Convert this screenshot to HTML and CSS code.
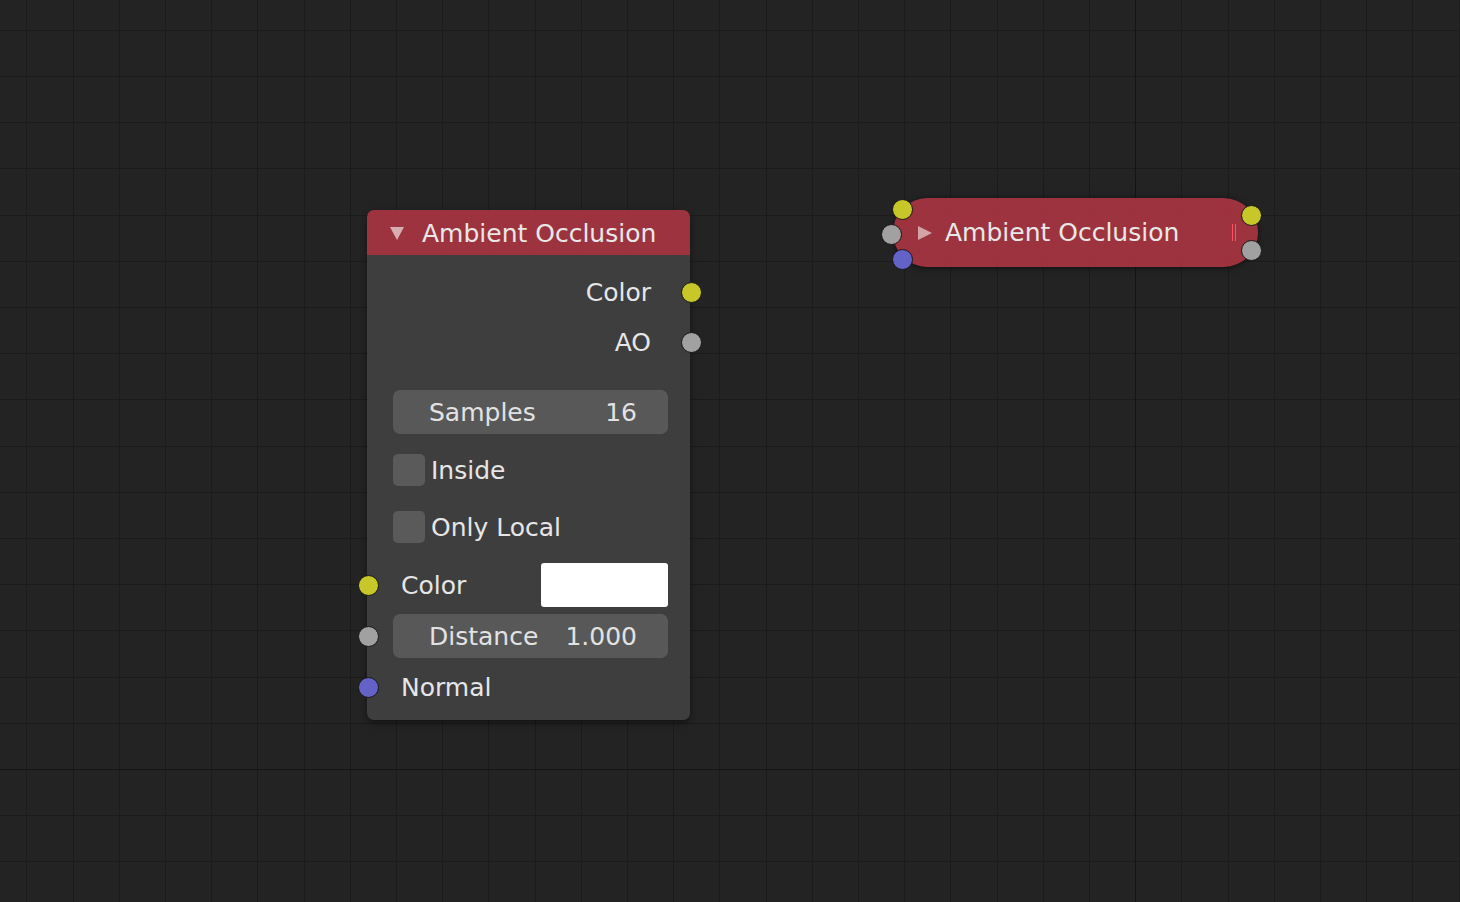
FILE: index.html
```html
<!DOCTYPE html>
<html>
<head>
<meta charset="utf-8">
<link rel="stylesheet" href="styles.css">
</head>
<body>
<div class="canvas">
  <svg class="grid" width="1460" height="902" viewBox="0 0 1460 902">
    <path class="minor" d="M26.5 0V902M73.5 0V902M119.5 0V902M165.5 0V902M211.5 0V902M257.5 0V902M304.5 0V902M350.5 0V902M396.5 0V902M442.5 0V902M488.5 0V902M535.5 0V902M581.5 0V902M627.5 0V902M673.5 0V902M719.5 0V902M766.5 0V902M812.5 0V902M858.5 0V902M904.5 0V902M950.5 0V902M997.5 0V902M1043.5 0V902M1089.5 0V902M1181.5 0V902M1228.5 0V902M1274.5 0V902M1320.5 0V902M1366.5 0V902M1412.5 0V902M1459.5 0V902M0 30.5H1460M0 76.5H1460M0 122.5H1460M0 168.5H1460M0 215.5H1460M0 261.5H1460M0 307.5H1460M0 353.5H1460M0 399.5H1460M0 446.5H1460M0 492.5H1460M0 538.5H1460M0 584.5H1460M0 630.5H1460M0 677.5H1460M0 723.5H1460M0 815.5H1460M0 861.5H1460"/>
    <path class="major" d="M1135.5 0V902M0 769.5H1460"/>
  </svg>

  <div class="node node-full">
    <div class="node-header">
      <span class="tri-down"></span>
      <span class="node-title">Ambient Occlusion</span>
    </div>
    <div class="node-body">
      <div class="row row-out row-first">
        <span class="label">Color</span>
        <span class="socket sock-yellow sock-out"></span>
      </div>
      <div class="row row-out">
        <span class="label">AO</span>
        <span class="socket sock-grey sock-out"></span>
      </div>
      <div class="row row-field row-samples">
        <div class="field">
          <span>Samples</span>
          <span>16</span>
        </div>
      </div>
      <div class="row row-check row-inside">
        <span class="checkbox"></span>
        <span class="label">Inside</span>
      </div>
      <div class="row row-check row-local">
        <span class="checkbox"></span>
        <span class="label">Only Local</span>
      </div>
      <div class="row row-in row-color">
        <span class="socket sock-yellow sock-in"></span>
        <span class="label">Color</span>
        <span class="swatch"></span>
      </div>
      <div class="row row-field row-distance">
        <span class="socket sock-grey sock-in"></span>
        <div class="field">
          <span>Distance</span>
          <span>1.000</span>
        </div>
      </div>
      <div class="row row-in row-normal">
        <span class="socket sock-blue sock-in"></span>
        <span class="label">Normal</span>
      </div>
    </div>
  </div>

  <div class="node node-collapsed">
    <span class="tri-right"></span>
    <span class="node-title">Ambient Occlusion</span>
    <span class="mute-bars"><i></i><i></i></span>
    <span class="socket sock-yellow c-in-1"></span>
    <span class="socket sock-grey c-in-2"></span>
    <span class="socket sock-blue c-in-3"></span>
    <span class="socket sock-yellow c-out-1"></span>
    <span class="socket sock-grey c-out-2"></span>
  </div>
</div>
</body>
</html>
```

FILE: styles.css
```css
* { box-sizing: border-box; }

html, body {
  margin: 0;
  padding: 0;
  background: #232323;
}

body {
  font-family: "DejaVu Sans", "Liberation Sans", sans-serif;
  font-size: 25px;
  color: #e6e6e6;
}

.canvas {
  position: relative;
  width: 1460px;
  height: 902px;
  overflow: hidden;
  background: #232323;
}

.grid {
  position: absolute;
  left: 0;
  top: 0;
  display: block;
}

.grid .minor {
  stroke: #1b1b1b;
  stroke-width: 1;
  fill: none;
  shape-rendering: crispEdges;
}

.grid .major {
  stroke: #141414;
  stroke-width: 1;
  fill: none;
  shape-rendering: crispEdges;
}

/* ---------- nodes ---------- */
.node {
  position: absolute;
}

.node-full {
  left: 367px;
  top: 210px;
  width: 323px;
  border-radius: 7px;
  box-shadow: 0 3px 6px rgba(0, 0, 0, 0.45);
}

.node-header {
  height: 45px;
  display: flex;
  align-items: center;
  padding: 3px 0 0 23px;
  gap: 18px;
  background: rgba(165, 52, 64, 0.94);
  border-radius: 7px 7px 0 0;
}

.node-title {
  line-height: 1;
  white-space: nowrap;
  color: #e8e8e8;
  padding-bottom: 1px;
}

.tri-down {
  width: 0;
  height: 0;
  margin-top: -2px;
  border-left: 7px solid transparent;
  border-right: 7px solid transparent;
  border-top: 13px solid rgba(255, 255, 255, 0.6);
}

.node-body {
  background: rgba(66, 66, 66, 0.88);
  border-radius: 0 0 7px 7px;
  padding: 12px 0 11px;
  display: flex;
  flex-direction: column;
}

.row {
  position: relative;
  display: flex;
  align-items: center;
}

.label {
  line-height: 1;
  white-space: nowrap;
}

.row-out {
  height: 50px;
  justify-content: flex-end;
  padding-right: 39px;
}

.row-field {
  height: 44px;
  padding: 0 22px 0 26px;
}

.row-samples { margin-top: 23px; }
.row-distance { margin-top: 7px; }

.field {
  flex: 1;
  height: 44px;
  border-radius: 7px;
  background: #585858;
  display: flex;
  align-items: center;
  justify-content: space-between;
  padding: 0 31px 0 36px;
  line-height: 1;
  color: #e2e2e2;
}

.row-check {
  height: 32px;
  padding-left: 26px;
  gap: 6px;
}

.row-inside { margin-top: 20px; }
.row-local { margin-top: 25px; }

.checkbox {
  width: 32px;
  height: 32px;
  border-radius: 5px;
  background: #5a5a5a;
}

.row-in {
  height: 44px;
  padding: 0 22px 0 34px;
}

.row-color {
  margin-top: 20px;
  justify-content: space-between;
}

.row-normal { margin-top: 7px; }

.swatch {
  width: 127px;
  height: 44px;
  border-radius: 3px;
  background: #ffffff;
}

/* ---------- sockets ---------- */
.socket {
  position: absolute;
  width: 21px;
  height: 21px;
  border-radius: 50%;
  border: 1px solid #171717;
}

.sock-yellow { background: #c7c729; }
.sock-grey { background: #a1a1a1; }
.sock-blue { background: #6363c7; }

.sock-out {
  right: -12px;
  top: 50%;
  margin-top: -10px;
}

.sock-in {
  left: -9px;
  top: 50%;
  margin-top: -10px;
}

/* ---------- collapsed node ---------- */
.node-collapsed {
  left: 893px;
  top: 198px;
  width: 365px;
  height: 69px;
  border-radius: 35px;
  background: rgba(165, 52, 64, 0.94);
  box-shadow: 0 1px 6px rgba(0, 0, 0, 0.55);
  display: flex;
  align-items: center;
  padding: 0 22px 0 25px;
  gap: 13px;
}

.tri-right {
  width: 0;
  height: 0;
  border-top: 7px solid transparent;
  border-bottom: 7px solid transparent;
  border-left: 14px solid rgba(255, 255, 255, 0.55);
}

.mute-bars {
  margin-left: auto;
  display: flex;
  gap: 2px;
  height: 17px;
}

.mute-bars i {
  display: block;
  width: 1px;
  height: 17px;
  background: #ff4f62;
}

.c-in-1 { left: -1px; top: 1px; }
.c-in-2 { left: -12px; top: 26px; }
.c-in-3 { left: -1px; top: 51px; }
.c-out-1 { right: -4px; top: 7px; }
.c-out-2 { right: -4px; top: 42px; }
```
